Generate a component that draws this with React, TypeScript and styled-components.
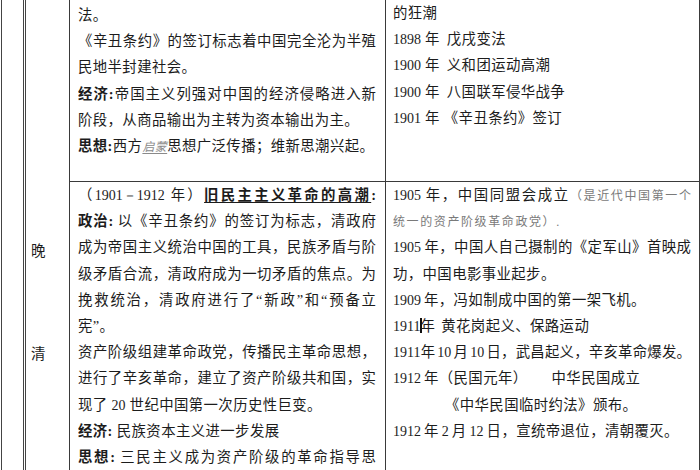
import React from "react";
import styled, { createGlobalStyle } from "styled-components";

const Global = createGlobalStyle`
  html, body { margin: 0; padding: 0; background: #fff; overflow: hidden; }
  body {
    font-family: "Liberation Serif", "Noto Sans CJK SC", serif;
    color: #1c1c1c;
  }
`;

const Table = styled.div`
  display: grid;
  grid-template-columns: 24px 44px 316px 314px;
  grid-template-rows: 181px 1fr;
  height: 500px;
  margin-left: 1px;
  border-left: 1px solid #444;
  box-sizing: border-box;
`;

const Cell = styled.div<{ $row: string; $col: number; $top?: boolean; $double?: boolean; $pl: number; $pr: number; $pt: number }>`
  grid-row: ${(p) => p.$row};
  grid-column: ${(p) => p.$col};
  box-sizing: border-box;
  border-right: ${(p) => (p.$double ? "3px double #444" : "1px solid #3a3a3a")};
  border-top: ${(p) => (p.$top ? "1px solid #3a3a3a" : "none")};
  padding: ${(p) => `${p.$pt}px ${p.$pr}px 0 ${p.$pl}px`};
  min-width: 0;
  overflow: hidden;
`;

const Era = styled.div`
  display: flex;
  flex-direction: column;
  gap: 77px;
  padding-top: 237px;
  font-family: "Noto Sans CJK SC", sans-serif;
  font-size: 14.5px;
  line-height: 26px;
`;

const Line = styled.div<{ $j?: boolean; $indent?: number }>`
  height: 26.2px;
  line-height: 26.2px;
  font-size: 14.4px;
  letter-spacing: ${(p) => (p.$j ? 0 : 0.4)}px;
  overflow: hidden;
  white-space: ${(p) => (p.$j ? "normal" : "nowrap")};
  text-align: ${(p) => (p.$j ? "justify" : "left")};
  text-align-last: ${(p) => (p.$j ? "justify" : "auto")};
  padding-left: ${(p) => p.$indent ?? 0}px;
`;

const Num = styled.span`
  font-family: "Liberation Serif", serif;
  font-size: 14px;
  letter-spacing: 0;
`;

const B = styled.b<{ $u?: boolean }>`
  font-weight: 700;
  text-decoration: ${(p) => (p.$u ? "underline" : "none")};
  text-underline-offset: 2px;
`;

const Faint = styled.span`
  color: #8a8a8a;
  font-style: italic;
  font-size: 12px;
  text-decoration: underline;
  text-underline-offset: 2px;
`;

const Note = styled.span<{ $sp?: number }>`
  color: #7a7a7a;
  font-size: 12px;
  letter-spacing: ${(p) => p.$sp ?? 0}px;
`;

const Caret = styled.span`
  display: inline-block;
  width: 2px;
  height: 15px;
  background: #111;
  vertical-align: -2px;
  margin-right: -2px;
`;

const Gap = styled.span<{ $w: number }>`
  display: inline-block;
  width: ${(p) => p.$w}px;
`;

export default function App() {
  return (
    <>
      <Global />
      <Table>
        <Cell $row="1 / 3" $col={1} $double $pl={0} $pr={0} $pt={0} />
        <Cell $row="1 / 3" $col={2} $pl={5} $pr={0} $pt={0}>
          <Era>
            <div>晚</div>
            <div>清</div>
          </Era>
        </Cell>

        <Cell $row="1" $col={3} $pl={8} $pr={9} $pt={2}>
          <Line>法。</Line>
          <Line $j>《辛丑条约》的签订标志着中国完全沦为半殖</Line>
          <Line>民地半封建社会。</Line>
          <Line $j><B>经济:</B>帝国主义列强对中国的经济侵略进入新</Line>
          <Line>阶段，从商品输出为主转为资本输出为主。</Line>
          <Line><B>思想:</B>西方<Faint>启蒙</Faint>思想广泛传播；维新思潮兴起。</Line>
        </Cell>

        <Cell $row="1" $col={4} $pl={7} $pr={6} $pt={0}>
          <Line>的狂潮</Line>
          <Line><Num>1898</Num><Gap $w={4} />年<Gap $w={7} />戊戌变法</Line>
          <Line><Num>1900</Num><Gap $w={4} />年<Gap $w={7} />义和团运动高潮</Line>
          <Line><Num>1900</Num><Gap $w={4} />年<Gap $w={7} />八国联军侵华战争</Line>
          <Line><Num>1901</Num><Gap $w={4} />年<Gap $w={4} />《辛丑条约》签订</Line>
        </Cell>

        <Cell $row="2" $col={3} $top $pl={8} $pr={9} $pt={0}>
          <Line $j>（<Num>1901－1912</Num> 年）<B $u>旧民主主义革命的高潮</B><B>:</B></Line>
          <Line $j><B>政治:</B> 以《辛丑条约》的签订为标志，清政府</Line>
          <Line $j>成为帝国主义统治中国的工具，民族矛盾与阶</Line>
          <Line $j>级矛盾合流，清政府成为一切矛盾的焦点。为</Line>
          <Line $j>挽救统治，清政府进行了“新政”和“预备立</Line>
          <Line>宪”。</Line>
          <Line $j>资产阶级组建革命政党，传播民主革命思想，</Line>
          <Line $j>进行了辛亥革命，建立了资产阶级共和国，实</Line>
          <Line>现了 <Num>20</Num> 世纪中国第一次历史性巨变。</Line>
          <Line><B>经济:</B> 民族资本主义进一步发展</Line>
          <Line $j><B>思想:</B> 三民主义成为资产阶级的革命指导思</Line>
        </Cell>

        <Cell $row="2" $col={4} $top $pl={7} $pr={8} $pt={0}>
          <Line $j><Num>1905</Num><Gap $w={3} />年，中国同盟会成立<Note>（是近代中国第一个</Note></Line>
          <Line><Note $sp={1.6}>统一的资产阶级革命政党）.</Note></Line>
          <Line $j><Num>1905</Num><Gap $w={3} />年，中国人自己摄制的《定军山》首映成</Line>
          <Line>功，中国电影事业起步。</Line>
          <Line><Num>1909</Num><Gap $w={3} />年，冯如制成中国的第一架飞机。</Line>
          <Line><Num>1911</Num><Caret />年<Gap $w={6} />黄花岗起义、保路运动</Line>
          <Line $j><Num>1911</Num>年<Gap $w={2} /><Num>10</Num><Gap $w={2} />月<Gap $w={2} /><Num>10</Num><Gap $w={2} />日，武昌起义，辛亥革命爆发。</Line>
          <Line><Num>1912</Num><Gap $w={3} />年（民国元年）<Gap $w={24} />中华民国成立</Line>
          <Line $indent={52}>《中华民国临时约法》颁布。</Line>
          <Line><Num>1912</Num><Gap $w={3} />年<Gap $w={3} /><Num>2</Num><Gap $w={3} />月<Gap $w={3} /><Num>12</Num><Gap $w={3} />日，宣统帝退位，清朝覆灭。</Line>
        </Cell>
      </Table>
    </>
  );
}
